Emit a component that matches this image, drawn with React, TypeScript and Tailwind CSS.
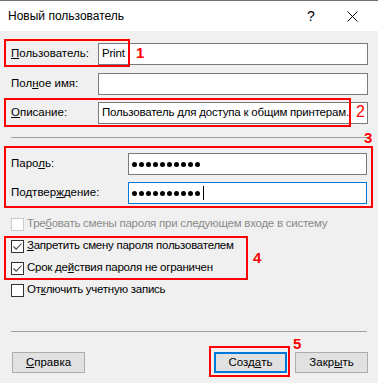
import React from 'react';

const font = "font-['Segoe_UI','Liberation_Sans','Noto_Sans',sans-serif]";

function Label({ children, w }: { children: React.ReactNode; w: string }) {
  return <div className={`${w} shrink-0 text-[11.5px] text-black`}>{children}</div>;
}

function Field({ value, w, focused }: { value?: React.ReactNode; w: string; focused?: boolean }) {
  return (
    <div
      className={`${w} h-[22px] bg-white border flex items-center px-[3px] text-[11.5px] tracking-[-0.2px] text-black whitespace-nowrap overflow-hidden ${
        focused ? 'border-[#0078d7]' : 'border-[#7a7a7a]'
      }`}
    >
      {value}
    </div>
  );
}

function Dots({ caret }: { caret?: boolean }) {
  return (
    <div className="flex items-center gap-[2px]">
      {Array.from({ length: 10 }).map((_, i) => (
        <span key={i} className="w-[5px] h-[5px] rounded-full bg-black" />
      ))}
      {caret && <span className="w-px h-[14px] bg-black ml-[1px]" />}
    </div>
  );
}

function Check({ checked, disabled, children }: { checked?: boolean; disabled?: boolean; children: React.ReactNode }) {
  return (
    <div className="flex items-center h-[22px]">
      <div
        className={`w-[13px] h-[13px] border bg-white flex items-center justify-center shrink-0 ${
          disabled ? 'border-[#cccccc]' : 'border-[#333333]'
        }`}
      >
        {checked && (
          <svg width="11" height="11" viewBox="0 0 11 11">
            <path d="M1.5 5.5 L4.2 8.2 L9.5 2.5" fill="none" stroke="#444" strokeWidth="1.1" />
          </svg>
        )}
      </div>
      <span
        className={`ml-[3px] text-[11.5px] tracking-[-0.25px] whitespace-nowrap ${
          disabled ? 'text-[#8a8a8a]' : 'text-black'
        }`}
      >
        {children}
      </span>
    </div>
  );
}

function Btn({ children, focused }: { children: React.ReactNode; focused?: boolean }) {
  return (
    <div
      className={`w-[73px] h-[21px] bg-[#e1e1e1] flex items-center justify-center text-[11.5px] text-black ${
        focused ? 'border-2 border-[#0078d7]' : 'border border-[#adadad]'
      }`}
    >
      {children}
    </div>
  );
}

export default function App() {
  return (
    <div className={`relative w-[378px] h-[383px] bg-[#f0f0f0] ${font} overflow-hidden`}>
      {/* Title bar */}
      <div className="h-[31px] bg-white border-t border-[#707070] flex items-center pl-[8px]">
        <span className="text-[12px] text-black flex-1">Новый пользователь</span>
        <span className="w-[30px] text-center text-[14px] text-black">?</span>
        <span className="w-[52px] flex justify-center">
          <svg width="11" height="11" viewBox="0 0 11 11">
            <path d="M0.5 0.5 L10.5 10.5 M10.5 0.5 L0.5 10.5" stroke="#000" strokeWidth="1" />
          </svg>
        </span>
      </div>

      {/* Body */}
      <div className="pl-[11px] pt-[12px]">
        <div className="flex items-center">
          <Label w="w-[87px]"><u>П</u>ользователь:</Label>
          <Field w="w-[270px]" value="Print" />
        </div>
        <div className="flex items-center mt-[8px]">
          <Label w="w-[87px]">Пол<u>н</u>ое имя:</Label>
          <Field w="w-[270px]" />
        </div>
        <div className="flex items-center mt-[7px]">
          <Label w="w-[87px]"><u>О</u>писание:</Label>
          <Field w="w-[270px]" value="Пользователь для доступа к общим принтерам." />
        </div>

        <div className="h-px bg-[#a0a0a0] w-[356px] mt-[13px]" />

        <div className="flex items-center mt-[15px]">
          <Label w="w-[117px]">Паро<u>л</u>ь:</Label>
          <Field w="w-[239px]" value={<Dots />} />
        </div>
        <div className="flex items-center mt-[7px]">
          <Label w="w-[117px]">Подтвер<u>ж</u>дение:</Label>
          <Field w="w-[239px]" focused value={<Dots caret />} />
        </div>

        <div className="mt-[9px] flex flex-col">
          <Check disabled>Тре<u>б</u>овать смены пароля при следующем входе в систему</Check>
          <Check checked><u>З</u>апретить смену пароля пользователем</Check>
          <Check checked>Срок де<u>й</u>ствия пароля не ограничен</Check>
          <Check>От<u>к</u>лючить учетную запись</Check>
        </div>

        <div className="h-px bg-[#a0a0a0] w-[356px] mt-[30px]" />

        <div className="flex items-center mt-[20px] w-[357px]">
          <div className="ml-[1px]">
            <Btn><u>С</u>правка</Btn>
          </div>
          <div className="ml-auto flex gap-[8px]">
            <Btn focused>Созд<u>а</u>ть</Btn>
            <Btn>Закр<u>ы</u>ть</Btn>
          </div>
        </div>
      </div>

      {/* Annotations */}
      <div className="absolute left-[4px] top-[39px] w-[126px] h-[28px] border-2 border-[#ff0000]" />
      <span className="absolute left-[136px] top-[45px] text-[15px] font-bold leading-none text-[#ff0000]">1</span>
      <div className="absolute left-[4px] top-[98px] w-[347px] h-[29px] border-2 border-[#ff0000]" />
      <span className="absolute left-[356px] top-[104px] text-[16px] leading-none text-[#ff0000]">2</span>
      <div className="absolute left-[4px] top-[146px] w-[369px] h-[62px] border-2 border-[#ff0000]" />
      <span className="absolute left-[364px] top-[130px] text-[15px] font-bold leading-none text-[#ff0000]">3</span>
      <div className="absolute left-[4px] top-[236px] w-[244px] h-[44px] border-2 border-[#ff0000]" />
      <span className="absolute left-[253px] top-[250px] text-[15px] font-bold leading-none text-[#ff0000]">4</span>
      <div className="absolute left-[209px] top-[346px] w-[81px] h-[31px] border-2 border-[#ff0000]" />
      <span className="absolute left-[293px] top-[336px] text-[15px] font-bold leading-none text-[#ff0000]">5</span>
    </div>
  );
}
